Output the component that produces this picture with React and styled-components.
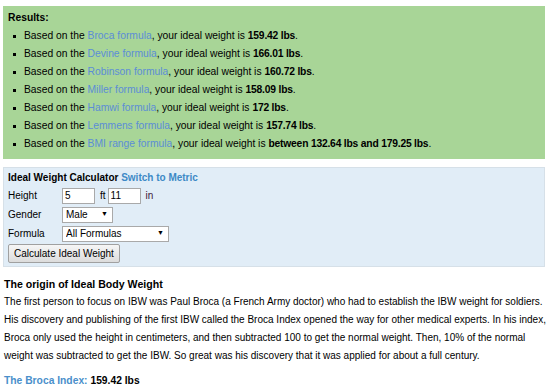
import React from 'react';
import styled, { createGlobalStyle } from 'styled-components';

const GlobalStyle = createGlobalStyle`
    body {
        margin: 0;
        background: #fff;
        font-family: "Liberation Sans", Arial, sans-serif;
        font-size: 10px;
        color: #000;
    }
`;

const Page = styled.div`
    padding: 6px 5px 0 3px;
    width: 542px;
`;

const ResultsBox = styled.div`
    background: #a8d597;
    padding: 3px 5px 6px 5px;
`;

const ResultsTitle = styled.div`
    font-weight: bold;
    font-size: 10.3px;
    line-height: 18px;
`;

const ResultList = styled.ul`
    margin: 0;
    padding: 0 0 0 16px;
    list-style: none;
`;

const ResultItem = styled.li`
    position: relative;
    font-size: 10.3px;
    line-height: 18px;
    &::before {
        content: '';
        position: absolute;
        left: -11px;
        top: 8px;
        width: 3px;
        height: 3px;
        background: #000;
    }
`;

const Weight = styled.b`
    letter-spacing: -0.2px;
`;

const FormulaLink = styled.a`
    color: #5b8dd6;
    text-decoration: none;
`;

const CalcBox = styled.div`
    margin-top: 8px;
    background: #e1edf7;
    border: 1px solid #d6e0e8;
    padding: 2px 4px 3px 4px;
`;

const CalcTitle = styled.div`
    font-weight: bold;
    line-height: 16px;
`;

const SwitchLink = styled.a`
    color: #3d89c6;
    text-decoration: none;
`;

const Row = styled.div`
    display: flex;
    align-items: center;
    height: 19px;
`;

const Label = styled.span`
    width: 54px;
`;

const TextInput = styled.input`
    box-sizing: border-box;
    width: 33px;
    height: 16px;
    border: 1px solid #a9a9a9;
    padding: 0 2px;
    font: 10px "Liberation Sans", Arial, sans-serif;
    color: #000;
    background: #fff;
`;

const Unit = styled.span`
    margin: 0 ${p => p.$gap}px 0 5px;
    color: ${p => p.$color || '#000'};
`;

const SelectWrap = styled.span`
    position: relative;
    display: inline-block;
    width: ${p => p.$width}px;
    height: 16px;
`;

const Select = styled.select`
    appearance: none;
    box-sizing: border-box;
    width: 100%;
    height: 100%;
    border: 1px solid #a9a9a9;
    background: #fff;
    padding: 0 3px;
    font: 10px "Liberation Sans", Arial, sans-serif;
    color: #000;
    border-radius: 0;
`;

const Arrow = styled.span`
    position: absolute;
    right: 5px;
    top: 3px;
    font-size: 7px;
    pointer-events: none;
`;

const Button = styled.button`
    margin-top: 1px;
    height: 19px;
    padding: 0 5px;
    font: 10px "Liberation Sans", Arial, sans-serif;
    color: #000;
    border: 1px solid #a0a0a0;
    border-radius: 2px;
    background: linear-gradient(#f6f6f6, #dcdcdc);
`;

const Heading = styled.div`
    margin-top: 9px;
    font-size: 10.6px;
    font-weight: bold;
    line-height: 16px;
    padding-left: 1px;
`;

const Paragraph = styled.p`
    margin: 1px 0 0 1px;
    line-height: 18px;
    white-space: nowrap;
`;

const IndexLine = styled.div`
    margin-top: 8px;
    padding-left: 1px;
    font-size: 10.3px;
    font-weight: bold;
    line-height: 16px;
`;

const IndexLink = styled.span`
    color: #4a8fcb;
`;

const results = [
    ['Broca', '159.42 lbs'],
    ['Devine', '166.01 lbs'],
    ['Robinson', '160.72 lbs'],
    ['Miller', '158.09 lbs'],
    ['Hamwi', '172 lbs'],
    ['Lemmens', '157.74 lbs'],
    ['BMI range', 'between 132.64 lbs and 179.25 lbs'],
];

const origin = [
    'The first person to focus on IBW was Paul Broca (a French Army doctor) who had to establish the IBW weight for soldiers.',
    'His discovery and publishing of the first IBW called the Broca Index opened the way for other medical experts. In his index,',
    'Broca only used the height in centimeters, and then subtracted 100 to get the normal weight. Then, 10% of the normal',
    'weight was subtracted to get the IBW. So great was his discovery that it was applied for about a full century.',
];

export default function App() {
    return (
        <Page>
            <GlobalStyle />
            <ResultsBox>
                <ResultsTitle>Results:</ResultsTitle>
                <ResultList>
                    {results.map(([name, value]) => (
                        <ResultItem key={name}>
                            Based on the <FormulaLink>{name} formula</FormulaLink>, your ideal weight is <Weight>{value}</Weight>.
                        </ResultItem>
                    ))}
                </ResultList>
            </ResultsBox>

            <CalcBox>
                <CalcTitle>Ideal Weight Calculator <SwitchLink>Switch to Metric</SwitchLink></CalcTitle>
                <Row>
                    <Label>Height</Label>
                    <TextInput defaultValue="5" />
                    <Unit $gap={2}>ft</Unit>
                    <TextInput defaultValue="11" />
                    <Unit $gap={0} $color="#3d1838">in</Unit>
                </Row>
                <Row>
                    <Label>Gender</Label>
                    <SelectWrap $width={51}>
                        <Select defaultValue="Male">
                            <option>Male</option>
                            <option>Female</option>
                        </Select>
                        <Arrow>▼</Arrow>
                    </SelectWrap>
                </Row>
                <Row>
                    <Label>Formula</Label>
                    <SelectWrap $width={107}>
                        <Select defaultValue="All Formulas">
                            <option>All Formulas</option>
                        </Select>
                        <Arrow>▼</Arrow>
                    </SelectWrap>
                </Row>
                <Button>Calculate Ideal Weight</Button>
            </CalcBox>

            <Heading>The origin of Ideal Body Weight</Heading>
            <Paragraph>
                {origin.map((line, i) => (
                    <React.Fragment key={i}>
                        {line}
                        {i < origin.length - 1 && <br />}
                    </React.Fragment>
                ))}
            </Paragraph>
            <IndexLine><IndexLink>The Broca Index:</IndexLink> 159.42 lbs</IndexLine>
        </Page>
    );
}
